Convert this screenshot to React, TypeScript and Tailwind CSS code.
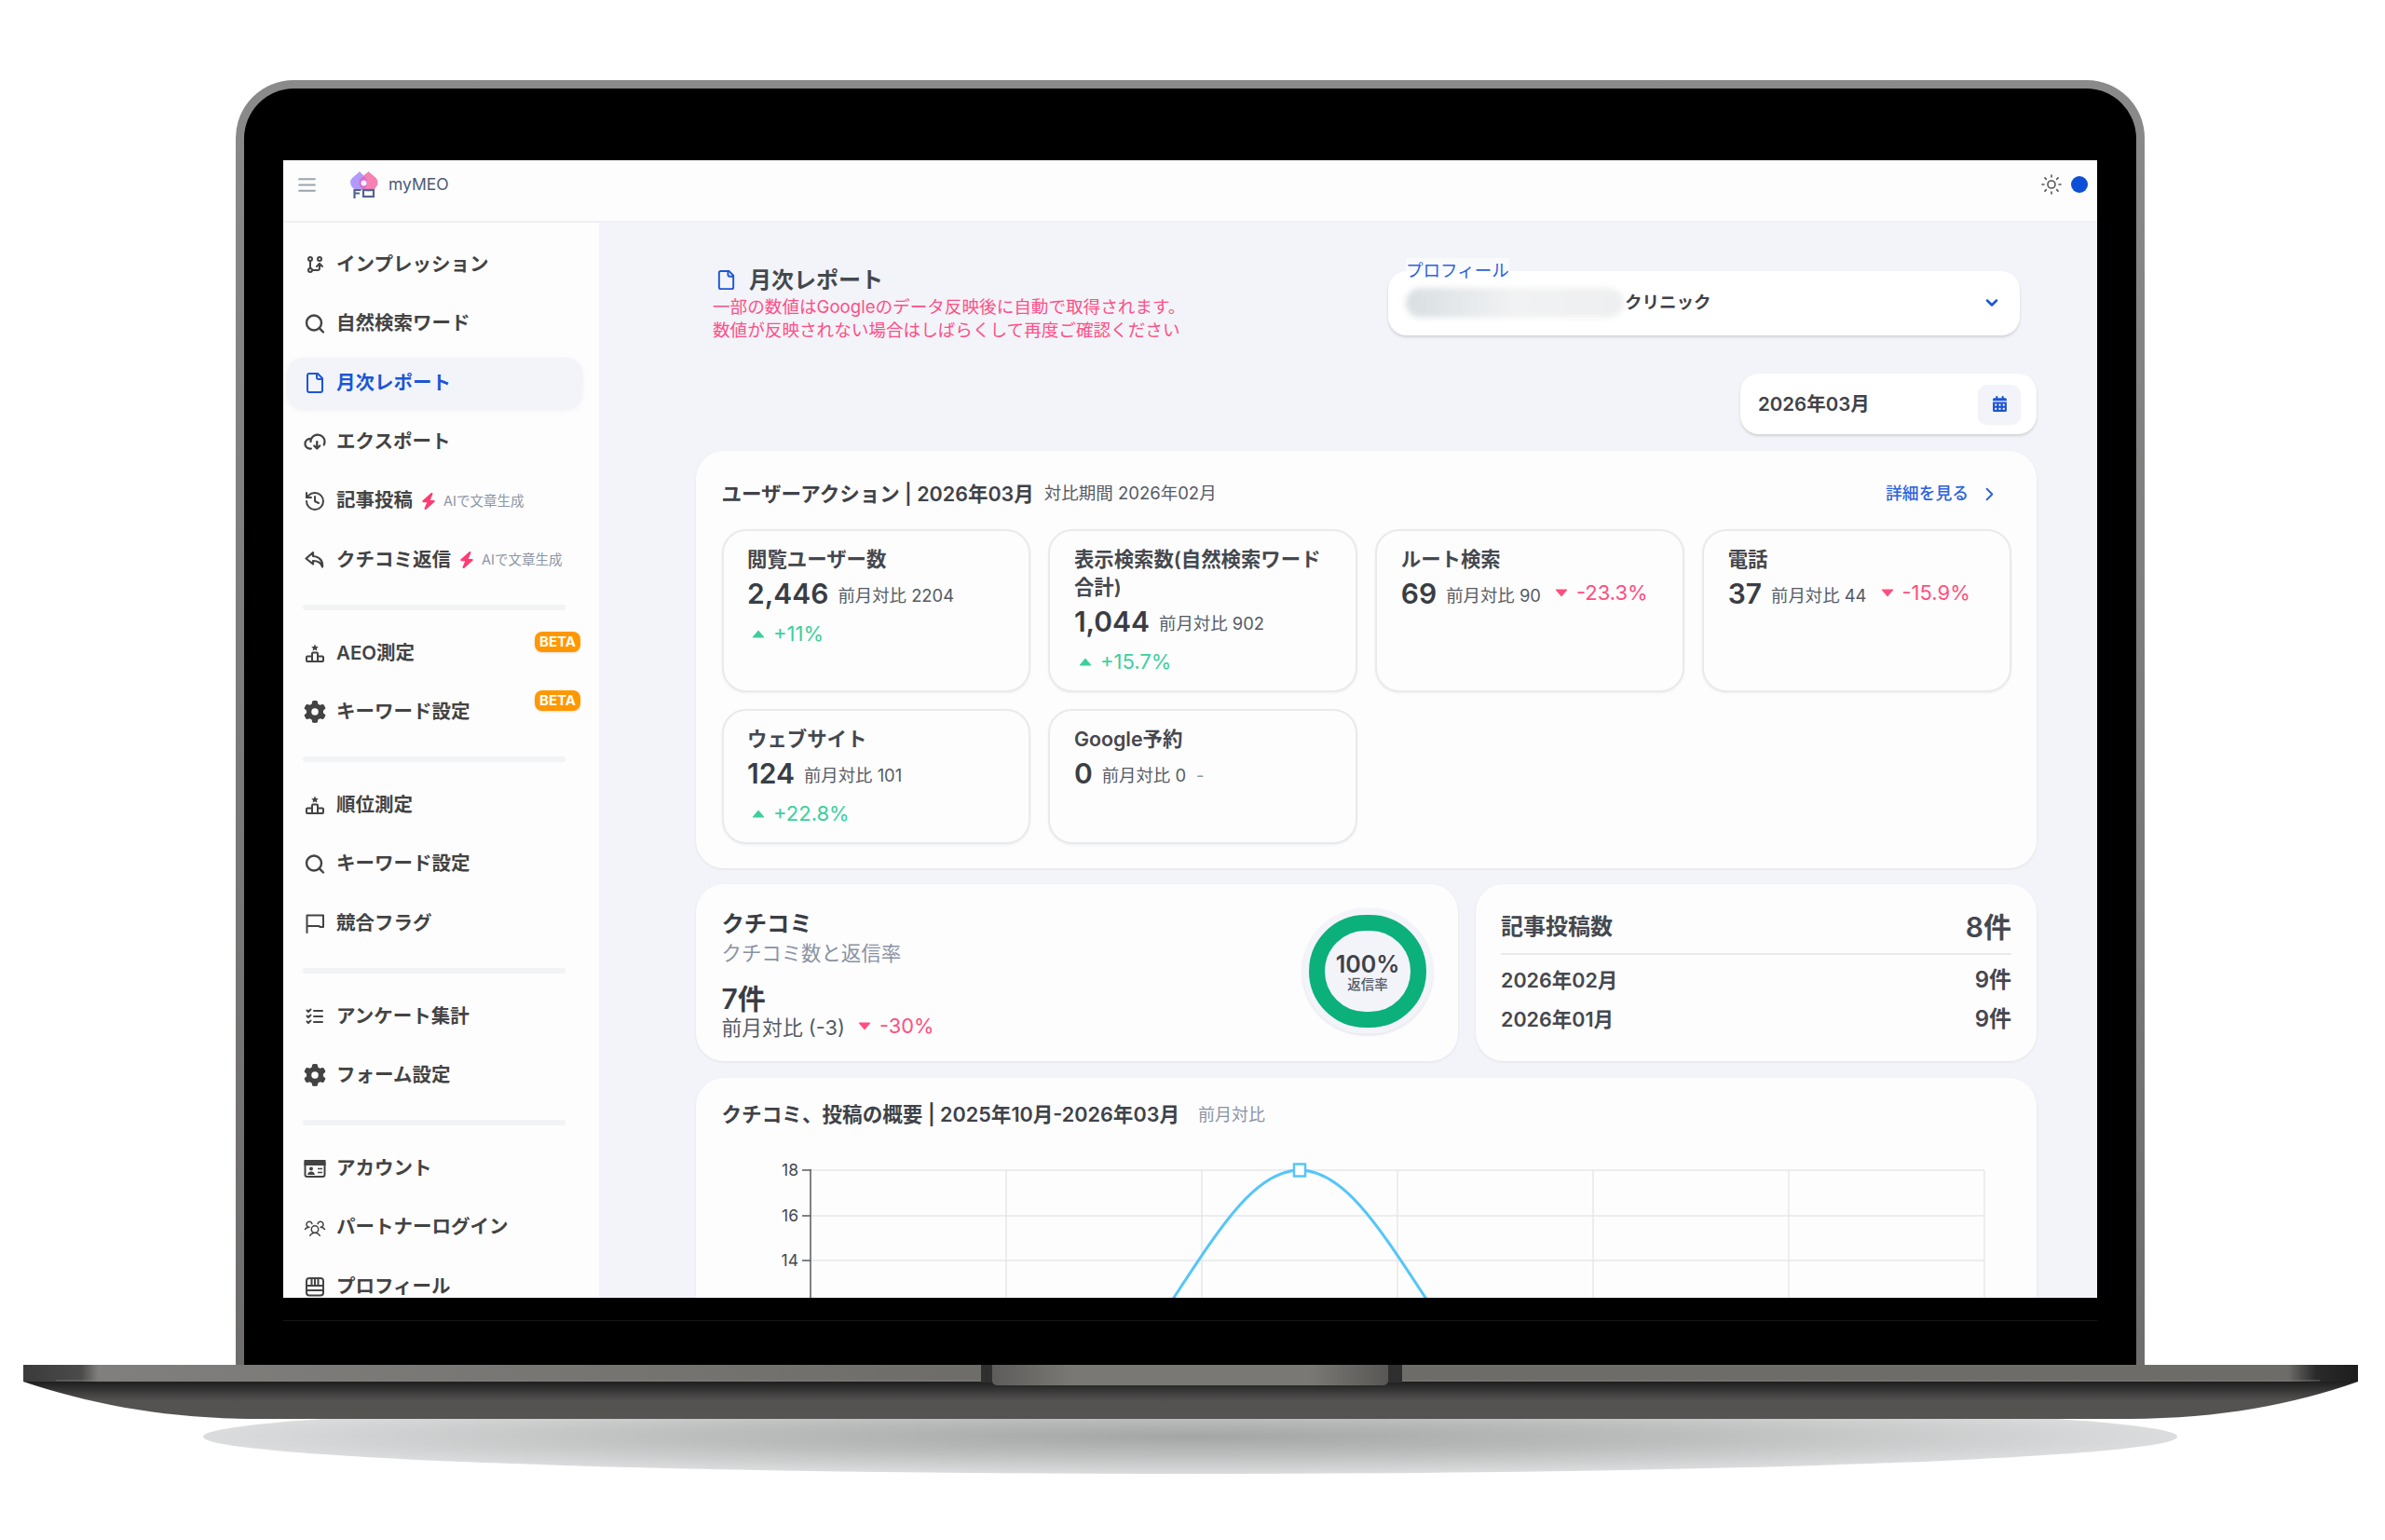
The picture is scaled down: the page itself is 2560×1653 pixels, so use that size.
import React from "react";
import { LuSearch, LuFile, LuHistory, LuChevronDown, LuChevronRight, LuSun, LuMenu } from "react-icons/lu";
import { TbGitBranch, TbListCheck } from "react-icons/tb";
import { PiCloudArrowDownBold, PiUsersThree } from "react-icons/pi";
import { FaGear, FaCalendarDays, FaBolt } from "react-icons/fa6";

const Podium = () => (
  <svg viewBox="0 0 24 24" className="w-[24px] h-[24px]" fill="none" stroke="currentColor" strokeWidth="2" strokeLinejoin="round">
    <path d="M12 2.5l1.2 2.4 2.6.3-1.9 1.8.5 2.6-2.4-1.3-2.4 1.3.5-2.6-1.9-1.8 2.6-.3z" fill="currentColor" stroke="none" />
    <path d="M9 21v-8.5a1 1 0 0 1 1-1h4a1 1 0 0 1 1 1V21M9 21H4a1 1 0 0 1-1-1v-3.5a1 1 0 0 1 1-1h5M15 21h5a1 1 0 0 0 1-1v-3.5a1 1 0 0 0-1-1h-5M9 21h6" />
  </svg>
);
const Flag = () => (
  <svg viewBox="0 0 24 24" className="w-[24px] h-[24px]" fill="none" stroke="currentColor" strokeWidth="2" strokeLinecap="round" strokeLinejoin="round">
    <path d="M3.5 22V3.5H21V16h-3.5l-1-1H3.5" />
  </svg>
);
const IdCard = () => (
  <svg viewBox="0 0 24 24" className="w-[25px] h-[25px]" fill="none" stroke="currentColor" strokeWidth="2">
    <rect x="1.5" y="3.5" width="21" height="17" rx="2" />
    <rect x="1.5" y="3.5" width="21" height="4" fill="currentColor" />
    <circle cx="8" cy="12" r="2" fill="currentColor" stroke="none" />
    <path d="M4 18.5c.5-2.5 2-3.5 4-3.5s3.500 1 4 3.500z" fill="currentColor" stroke="none" />
    <path d="M15 12h5M15 16h5" strokeWidth="1.6" />
  </svg>
);
const Store = () => (
  <svg viewBox="0 0 24 24" className="w-[24px] h-[24px]" fill="none" stroke="currentColor" strokeWidth="2" strokeLinejoin="round">
    <rect x="3" y="3" width="18" height="18.500" rx="3" />
    <path d="M3 11h18M3 16h18M8.500 3v8M12 3v8M15.500 3v8" />
  </svg>
);
const Reply = () => (
  <svg viewBox="0 0 24 24" className="w-[24px] h-[24px]" fill="none" stroke="currentColor" strokeWidth="2.200" strokeLinecap="round" strokeLinejoin="round">
    <path d="M10 4L2.500 10.500 10 16.500V13c5 0 8.500 1.500 10 6.500 .8-6-2.500-11-10-11.500z" />
  </svg>
);

const Logo = () => (
  <svg viewBox="0 0 31 29" className="w-[31px] h-[29px]">
    <path d="M11 0c3 3.500 8 7 8 11.500a9 9 0 0 1-18 0C1 7 8 3.500 11 0z" fill="#b09bfb" />
    <path d="M20.500 0c3 3.500 10 6.500 10 11.500a10 10 0 0 1-20 0C10.500 6.500 17.500 3.500 20.500 0z" fill="#f582b0" />
    <path d="M15.500 4.800c2 2 3.500 4 3.500 6.700a8 8 0 0 1-3.500 7.500 8 8 0 0 1-5-7.500c0-2.700 3-4.700 5-6.700z" fill="#cf6fd8" />
    <circle cx="15.500" cy="12.500" r="3" fill="#fdf2f8" />
    <path d="M5.500 29v-9h7M5.500 23.500h5.500" stroke="#53658d" strokeWidth="2.200" fill="none" />
    <rect x="15" y="20" width="11" height="7" fill="none" stroke="#53658d" strokeWidth="2.200" />
  </svg>
);

const Up = () => (
  <svg viewBox="0 0 14 9" className="w-[14px] h-[9px] shrink-0">
    <path d="M7 .5l6 7a.6.6 0 0 1-.5 1h-11a.6.6 0 0 1-.5-1z" fill="currentColor" />
  </svg>
);
const Down = () => (
  <svg viewBox="0 0 14 9" className="w-[14px] h-[9px] shrink-0">
    <path d="M7 8.500l-6-7a.6.6 0 0 1 .5-1h11a.6.6 0 0 1 .5 1z" fill="currentColor" />
  </svg>
);

function Item({ icon, label, active, extra, beta }: { icon: React.ReactNode; label: string; active?: boolean; extra?: boolean; beta?: boolean }) {
  return (
    <div className="h-[63.4px] flex items-center">
      <div
        className={
          active
            ? "relative ml-[4px] w-[317px] h-[54px] pl-[18px] flex items-center gap-[11px] rounded-[18px] bg-[#f2f4f9] shadow-[0_2px_6px_rgba(120,130,160,0.12)] text-[#1d55d6]"
            : "relative ml-[4px] w-[317px] h-[54px] pl-[18px] flex items-center gap-[11px] text-[#434343]"
        }
      >
        <span className="w-[24px] h-[24px] flex items-center justify-center shrink-0 text-[24px]">{icon}</span>
        <span className="text-[20.500px] font-semibold whitespace-nowrap">{label}</span>
        {extra && (
          <span className="flex items-center -ml-[3px] gap-[7px]">
            <FaBolt className="text-[#ff3b72] text-[18px]" />
            <span className="text-[14.500px] text-[#8d95a5] whitespace-nowrap">AIで文章生成</span>
          </span>
        )}
        {beta && (
          <span className="absolute right-[2px] top-[4px] w-[49px] h-[22px] rounded-[8px] bg-[#ff9800] text-white text-[15px] font-bold flex items-center justify-center shadow-sm">
            BETA
          </span>
        )}
      </div>
    </div>
  );
}

const Divider = () => <div className="ml-[21px] w-[282px] h-[6px] rounded-full bg-[#f2f3f5] mt-[16px] mb-[14.500px]" />;

function Metric({ title, value, prev, delta, dir, inline }: { title: string; value: string; prev: string; delta?: string; dir?: "up" | "down"; inline?: boolean }) {
  const color = dir === "up" ? "text-[#3dcf9e]" : "text-[#ff4f7f]";
  const d = delta ? (
    <span className={`flex items-center gap-[9px] text-[22px] whitespace-nowrap ${color}`}>
      {dir === "up" ? <Up /> : <Down />}
      {delta}
    </span>
  ) : null;
  return (
    <div className="rounded-[26px] border-2 border-[#e9eaec] bg-[#fdfdfd] shadow-[0_1px_3px_rgba(0,0,0,0.06)] pl-[25.500px] pr-[25px] pt-[15px]">
      <div className="text-[21.400px] leading-[30px] font-semibold text-[#45484e]">{title}</div>
      <div className="h-[44px] flex items-center whitespace-nowrap">
        <span className="text-[30px] font-semibold text-[#3a3d44]">{value}</span>
        <span className="ml-[10px] mt-[6px] text-[18.400px] text-[#555a64]">{prev}</span>
        {inline && d && <span className="ml-[15px] flex -mt-[1px]">{d}</span>}
      </div>
      {!inline && d && <div className="mt-[6px] h-[30px] flex items-center pl-[5px]">{d}</div>}
    </div>
  );
}

export default function App() {
  return (
    <div className="w-[2560px] h-[1653px] bg-white overflow-hidden pt-[86px] font-['Inter','Noto_Sans_CJK_JP',sans-serif]">
      {/* lid */}
      <div className="ml-[253px] w-[2049px] h-[1379px] rounded-t-[62px] bg-gradient-to-b from-[#8a8a8a] to-[#6f6d6b] px-[9px] pt-[9px]">
        <div className="h-[1370px] rounded-t-[54px] bg-black px-[42px] pt-[77px]">
          <div className="w-[1947px] h-[1221px] overflow-hidden bg-[#f2f4f9] flex flex-col">
            {/* header */}
            <header className="h-[67px] shrink-0 bg-[#fdfdfd] border-b-2 border-[#eff0f3] flex items-center pb-[13px] pl-[13px] pr-[10px]">
              <LuMenu className="text-[#9ca3af] text-[25px]" />
              <span className="ml-[33px]"><Logo /></span>
              <span className="ml-[11px] text-[17.500px] text-[#4b5a75]">myMEO</span>
              <div className="ml-auto flex items-center gap-[9px]">
                <LuSun className="text-[#555] text-[24px]" strokeWidth={1.6} />
                <span className="w-[18px] h-[18px] rounded-full bg-[#0d4fd6]" />
              </div>
            </header>
            <div className="flex flex-1 min-h-0">
              {/* sidebar */}
              <aside className="w-[339px] shrink-0 bg-[#fdfdfd] pt-[13.500px]">
                <Item icon={<TbGitBranch className="text-[26px]" />} label="インプレッション" />
                <Item icon={<LuSearch strokeWidth={2.4} className="text-[25px]" />} label="自然検索ワード" />
                <Item icon={<LuFile />} label="月次レポート" active />
                <Item icon={<PiCloudArrowDownBold className="text-[26px]" />} label="エクスポート" />
                <Item icon={<LuHistory />} label="記事投稿" extra />
                <Item icon={<Reply />} label="クチコミ返信" extra />
                <Divider />
                <Item icon={<Podium />} label="AEO測定" beta />
                <Item icon={<FaGear />} label="キーワード設定" beta />
                <Divider />
                <Item icon={<Podium />} label="順位測定" />
                <Item icon={<LuSearch strokeWidth={2.4} className="text-[25px]" />} label="キーワード設定" />
                <Item icon={<Flag />} label="競合フラグ" />
                <Divider />
                <Item icon={<TbListCheck className="text-[26px]" />} label="アンケート集計" />
                <Item icon={<FaGear />} label="フォーム設定" />
                <Divider />
                <Item icon={<IdCard />} label="アカウント" />
                <Item icon={<PiUsersThree className="text-[28px]" />} label="パートナーログイン" />
                <Item icon={<Store />} label="プロフィール" />
              </aside>
              {/* main */}
              <main className="flex-1 min-w-0 pl-[104px] pr-[65px] pt-[46px]">
                <div className="flex justify-between items-start">
                  <div className="pl-[18px]">
                    <div className="h-[31.500px] flex items-center gap-[13px] pl-[3px]">
                      <LuFile className="text-[#1d55d6] text-[23px]" />
                      <span className="text-[24px] font-semibold text-[#45484e]">月次レポート</span>
                    </div>
                    <p className="text-[18.600px] leading-[25px] text-[#ff4f86]">一部の数値はGoogleのデータ反映後に自動で取得されます。</p>
                    <p className="text-[18.600px] leading-[25px] text-[#ff4f86]">数値が反映されない場合はしばらくして再度ご確認ください</p>
                  </div>
                  <div className="relative mt-[5.500px] mr-[18px] w-[678px] h-[69px] rounded-[20px] bg-white shadow-[0_2px_3px_rgba(0,0,0,0.14)] flex items-center pl-[19px] pr-[20px]">
                    <span className="absolute left-[19px] -top-[14px] text-[18.500px] leading-[26px] text-[#2b62dd] bg-white/50">プロフィール</span>
                    <span className="w-[234px] h-[32px] rounded-full bg-gradient-to-r from-[#d9dfe2] via-[#f1f2f3] to-[#eeeff0] blur-[3px] shrink-0" />
                    <span className="ml-[1px] text-[18.500px] font-semibold text-[#3f4248]">クリニック</span>
                    <LuChevronDown className="ml-auto text-[#1d55d6] text-[20px]" strokeWidth={3} />
                  </div>
                </div>
                <div className="flex justify-end mt-[34.500px]">
                  <div className="w-[318px] h-[65px] rounded-[20px] bg-white shadow-[0_2px_3px_rgba(0,0,0,0.14)] flex items-center pl-[19px] pr-[17px] justify-between">
                    <span className="mt-[1px] text-[20.500px] font-semibold text-[#3f4248]">2026年03月</span>
                    <span className="w-[46px] h-[42px] rounded-[10px] bg-[#f2f4f9] shadow-[0_1px_2px_rgba(0,0,0,0.06)] flex items-center justify-center">
                      <FaCalendarDays className="text-[#1d55d6] text-[17px]" />
                    </span>
                  </div>
                </div>

                {/* user actions */}
                <section className="mt-[18px] rounded-[30px] bg-[#fdfdfe] shadow-[0_1px_3px_rgba(0,0,0,0.07)] pt-[32px] pl-[27.500px] pr-[27px] pb-[26px]">
                  <div className="h-[28px] flex items-center mb-[24px] whitespace-nowrap">
                    <span className="text-[21.500px] font-semibold text-[#3f4248]">ユーザーアクション | 2026年03月</span>
                    <span className="ml-[11px] text-[18.500px] text-[#555a64]">対比期間 2026年02月</span>
                    <span className="ml-auto flex items-center gap-[11px] text-[17.800px] text-[#2b62dd] font-medium pr-[12px]">
                      詳細を見る
                      <LuChevronRight className="text-[23px]" />
                    </span>
                  </div>
                  <div className="grid grid-cols-4 grid-rows-[175px_145px] gap-x-[19px] gap-y-[18px]">
                    <Metric title="閲覧ユーザー数" value="2,446" prev="前月対比 2204" delta="+11%" dir="up" />
                    <Metric title="表示検索数(自然検索ワード合計)" value="1,044" prev="前月対比 902" delta="+15.7%" dir="up" />
                    <Metric title="ルート検索" value="69" prev="前月対比 90" delta="-23.3%" dir="down" inline />
                    <Metric title="電話" value="37" prev="前月対比 44" delta="-15.9%" dir="down" inline />
                    <Metric title="ウェブサイト" value="124" prev="前月対比 101" delta="+22.8%" dir="up" />
                    <div className="rounded-[26px] border-2 border-[#e9eaec] bg-[#fdfdfd] shadow-[0_1px_3px_rgba(0,0,0,0.06)] pl-[25.500px] pr-[16px] pt-[15px]">
                      <div className="text-[21.400px] leading-[30px] font-semibold text-[#45484e]">Google予約</div>
                      <div className="h-[44px] flex items-center whitespace-nowrap">
                        <span className="text-[30px] font-semibold text-[#3a3d44]">0</span>
                        <span className="ml-[10px] mt-[6px] text-[18.400px] text-[#555a64]">前月対比 0</span>
                        <span className="ml-[11px] mt-[6px] text-[18.400px] text-[#8d95a5]">-</span>
                      </div>
                    </div>
                  </div>
                </section>

                {/* row */}
                <div className="mt-[17px] flex gap-[19px]">
                  <section className="w-[818px] h-[190px] rounded-[30px] bg-[#fdfdfe] shadow-[0_1px_3px_rgba(0,0,0,0.07)] pl-[27.500px] pr-[27px] pt-[27px] flex justify-between">
                    <div>
                      <div className="text-[24.300px] leading-[30px] font-semibold text-[#3a3d44]">クチコミ</div>
                      <div className="mt-[3px] text-[21.400px] leading-[28px] text-[#8a92a3]">クチコミ数と返信率</div>
                      <div className="mt-[18px] text-[30px] leading-[34px] font-semibold text-[#3a3d44]">7件</div>
                      <div className="h-[28px] flex items-center text-[21.800px] text-[#555a64] whitespace-nowrap">
                        前月対比 (-3)
                        <span className="ml-[14px] flex items-center gap-[9px] text-[#ff4f7f] -mt-[3px]"><Down />-30%</span>
                      </div>
                    </div>
                    <div className="w-[140px] h-[135px] -mt-[1px] rounded-full bg-[#f2f4f9] shadow-[0_1px_3px_rgba(0,0,0,0.12)] flex items-center justify-center">
                      <div className="w-[126px] h-[121px] rounded-full border-[17px] border-[#0bb07b] flex flex-col items-center justify-center">
                        <span className="text-[25px] leading-[27px] mt-[1px] font-semibold text-[#3f4248]">100%</span>
                        <span className="text-[14.500px] leading-[16px] font-medium text-[#555a64]">返信率</span>
                      </div>
                    </div>
                  </section>
                  <section className="flex-1 h-[190px] rounded-[30px] bg-[#fdfdfe] shadow-[0_1px_3px_rgba(0,0,0,0.07)] px-[27px] pt-[23px] text-[#45484e]">
                    <div className="h-[53px] pb-[5px] border-b-2 border-[#e9eaec] flex items-center justify-between">
                      <span className="text-[24px] font-semibold">記事投稿数</span>
                      <span className="text-[30px] font-semibold">8件</span>
                    </div>
                    <div className="pt-[6px]">
                      <div className="h-[42px] flex items-center justify-between font-semibold">
                        <span className="text-[21.500px]">2026年02月</span>
                        <span className="text-[24px]">9件</span>
                      </div>
                      <div className="h-[42px] flex items-center justify-between font-semibold">
                        <span className="text-[21.500px]">2026年01月</span>
                        <span className="text-[24px]">9件</span>
                      </div>
                    </div>
                  </section>
                </div>

                {/* chart */}
                <section className="mt-[18px] h-[400px] rounded-[30px] bg-[#fdfdfe] shadow-[0_1px_3px_rgba(0,0,0,0.07)] pt-[25px]">
                  <div className="h-[28px] pl-[27.500px] flex items-center whitespace-nowrap">
                    <span className="text-[21.600px] font-semibold text-[#3f4248]">クチコミ、投稿の概要 | 2025年10月-2026年03月</span>
                    <span className="ml-[20px] text-[18px] text-[#8a92a3]">前月対比</span>
                  </div>
                  <svg viewBox="747 1210 1438 190" className="w-[1438px] h-[190px] block">
                    {[1256, 1305, 1353].map((y) => (
                      <line key={y} x1="870" x2="2130" y1={y} y2={y} stroke="#e6e7ea" strokeWidth="1.500" />
                    ))}
                    {[1080, 1290, 1500, 1710, 1920, 2130].map((x) => (
                      <line key={x} x1={x} x2={x} y1="1256" y2="1400" stroke="#e6e7ea" strokeWidth="1.500" />
                    ))}
                    <line x1="870" x2="870" y1="1255" y2="1400" stroke="#55585e" strokeWidth="1.500" />
                    {[1256, 1305, 1353].map((y) => (
                      <line key={y} x1="861" x2="870" y1={y} y2={y} stroke="#55585e" strokeWidth="1.500" />
                    ))}
                    {[["18", 1256], ["16", 1305], ["14", 1353]].map(([t, y]) => (
                      <text key={t} x="857" y={Number(y) + 5.500} textAnchor="end" fontSize="17.500" fill="#45484e">{t}</text>
                    ))}
                    <path d="M1250 1408C1305 1325 1345 1256 1395 1256C1445 1256 1485 1325 1540 1408" fill="none" stroke="#55c5fa" strokeWidth="3" />
                    <rect x="1389" y="1249.500" width="12" height="13" fill="#fff" stroke="#55c5fa" strokeWidth="2.500" />
                  </svg>
                </section>
              </main>
            </div>
          </div>
          <div className="mt-[24px] h-[1px] bg-[#161616]" />
        </div>
      </div>
      {/* base of the laptop */}
      <svg viewBox="0 1465 2560 102" className="w-[2560px] h-[102px] block overflow-visible">
        <defs>
          <radialGradient id="shadow" cx="0.5" cy="0.5" r="0.5">
            <stop offset="0" stopColor="#a4a5a5" />
            <stop offset="0.5" stopColor="#bcbebe" />
            <stop offset="1" stopColor="#dadcdd" />
          </radialGradient>
          <linearGradient id="body" x1="0" x2="0" y1="0" y2="1">
            <stop offset="0" stopColor="#1e1e1e" />
            <stop offset="0.5" stopColor="#545251" />
            <stop offset="1" stopColor="#565453" />
          </linearGradient>
          <linearGradient id="lip" x1="25" x2="2531" y1="0" y2="0" gradientUnits="userSpaceOnUse">
            <stop offset="0" stopColor="#3a3a3a" />
            <stop offset="0.025" stopColor="#4b4b4b" />
            <stop offset="0.032" stopColor="#807f7d" />
            <stop offset="0.42" stopColor="#6d6c69" />
            <stop offset="0.97" stopColor="#6d6c69" />
            <stop offset="0.982" stopColor="#2a2a2a" />
            <stop offset="1" stopColor="#1d1d1d" />
          </linearGradient>
          <linearGradient id="notch" x1="0" x2="1" y1="0" y2="0">
            <stop offset="0" stopColor="#5d5c5a" />
            <stop offset="0.2" stopColor="#797875" />
            <stop offset="0.8" stopColor="#797875" />
            <stop offset="1" stopColor="#585755" />
          </linearGradient>
        </defs>
        <ellipse cx="1277.500" cy="1542" rx="1059.500" ry="40" fill="url(#shadow)" />
        <path d="M25 1483C100 1508 180 1523 280 1523L2280 1523C2380 1523 2460 1508 2531 1483Z" fill="url(#body)" />
        <rect x="25" y="1465" width="2506" height="18" fill="url(#lip)" />
        <rect x="60" y="1481" width="2430" height="1.500" fill="#7d7c7a" opacity="0.5" />
        <rect x="1053" y="1465" width="12" height="19" fill="#2f2f2f" />
        <rect x="1490" y="1465" width="15" height="19" fill="#2f2f2f" />
        <path d="M1065 1465H1490V1482a5 5 0 0 1-5 5H1070a5 5 0 0 1-5-5Z" fill="url(#notch)" />
      </svg>
    </div>
  );
}
